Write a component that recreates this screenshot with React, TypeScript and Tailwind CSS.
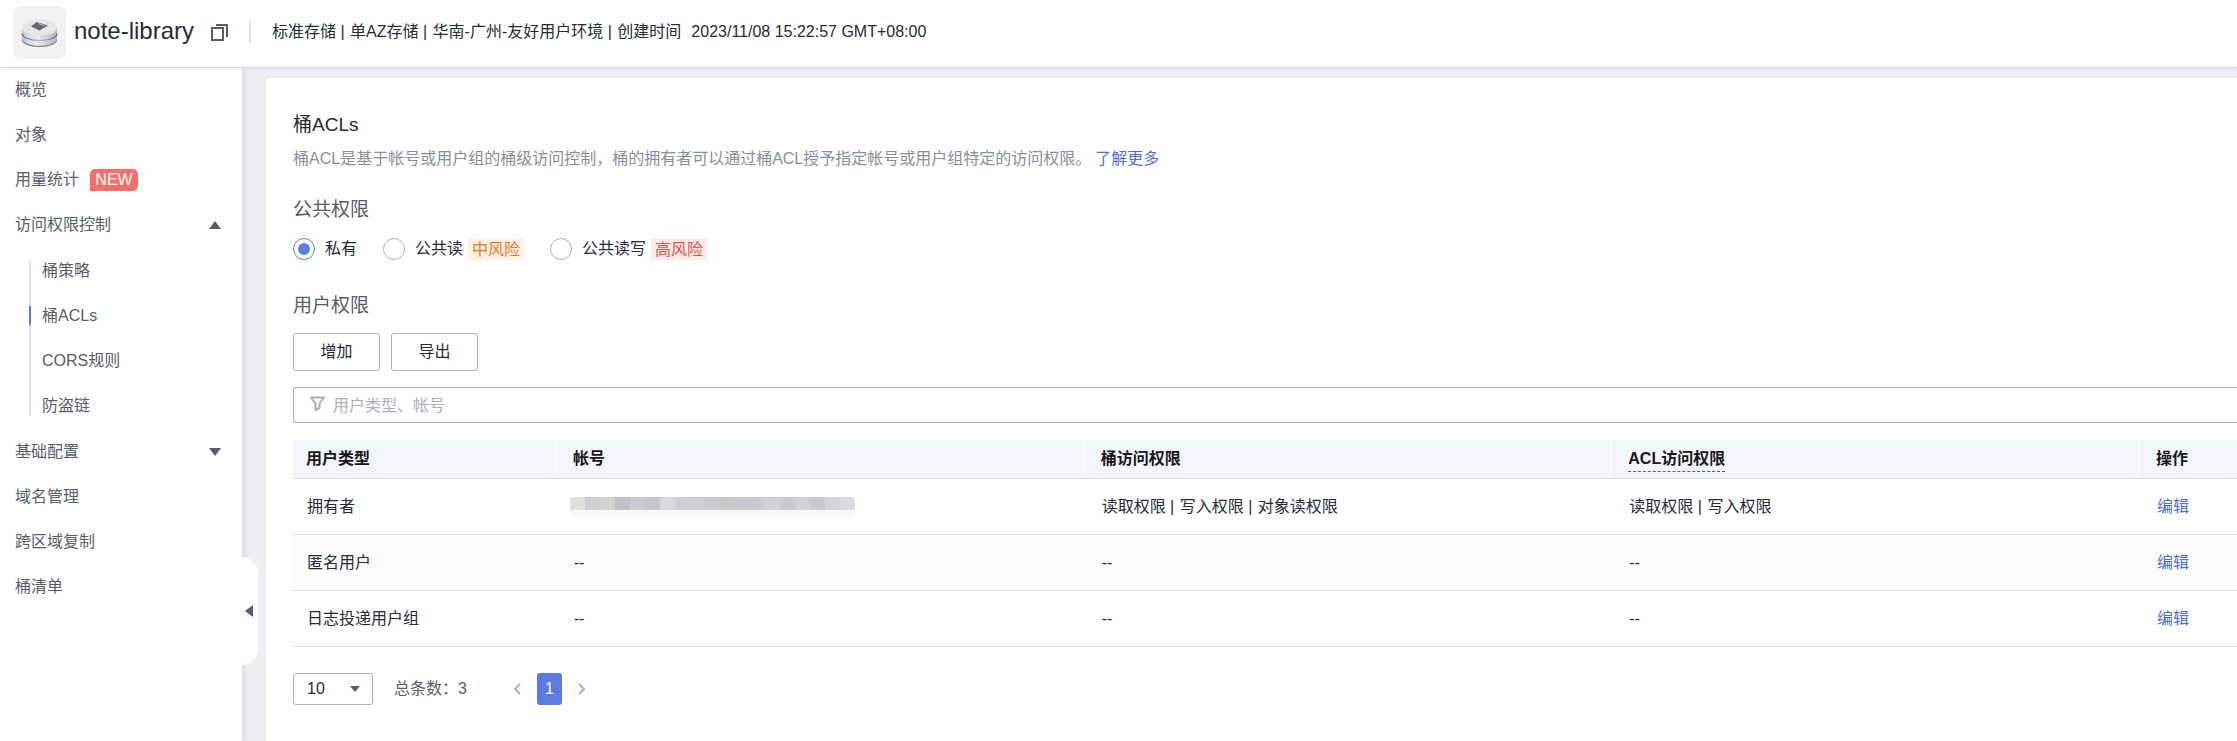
import React from 'react';
import clsx from 'clsx';

const columns = ['用户类型', '帐号', '桶访问权限', 'ACL访问权限', '操作'];

type Row = { type: string; account: string | null; bucket: string[]; acl: string[] };

const rows: Row[] = [
  { type: '拥有者', account: null, bucket: ['读取权限', '写入权限', '对象读权限'], acl: ['读取权限', '写入权限'] },
  { type: '匿名用户', account: '--', bucket: ['--'], acl: ['--'] },
  { type: '日志投递用户组', account: '--', bucket: ['--'], acl: ['--'] },
];

const maskTiles = [
  'bg-[#dfdfe2]', 'bg-[#ccd0d6]', 'bg-[#d2d2d3]', 'bg-[#bec1cb]', 'bg-[#cbccd1]', 'bg-[#c8c6cc]', 'bg-[#d9dadf]',
  'bg-[#cfcfd1]', 'bg-[#cfd0d7]', 'bg-[#cbccd2]', 'bg-[#c8c8c9]', 'bg-[#c9cad1]', 'bg-[#cacbce]', 'bg-[#d0d1d5]',
  'bg-[#c8c9d0]', 'bg-[#d0d2d6]', 'bg-[#c9cacf]', 'bg-[#d4d5d8]', 'bg-[#d9dae2]',
];

function MaskedAccount() {
  return (
    <div className="w-[285px] overflow-hidden rounded-[4px]" aria-hidden="true">
      <div className="flex h-[13px]">
        {maskTiles.map((tile, i) => (
          <span key={i} className={clsx('h-full flex-1', tile)} />
        ))}
      </div>
      <div className="h-[7px] bg-[#f9f9fa]" />
    </div>
  );
}

function Piped({ items }: { items: string[] }) {
  return (
    <>
      {items.map((item, i) => (
        <React.Fragment key={item}>
          {i > 0 && <span className="mr-px"> | </span>}
          {item}
        </React.Fragment>
      ))}
    </>
  );
}

function Triangle({ className, points, box }: { className?: string; points: string; box: string }) {
  return (
    <svg className={clsx('fill-[#575d6c]', className)} viewBox={box} aria-hidden="true">
      <polygon points={points} />
    </svg>
  );
}

function BucketLogo() {
  return (
    <svg className="size-[53px]" viewBox="0 0 53 53" aria-hidden="true">
      <defs>
        <linearGradient id="side" x1="0" x2="1">
          <stop offset="0" stopColor="#c4c5c8" />
          <stop offset="0.4" stopColor="#ececee" />
          <stop offset="1" stopColor="#b4b5b9" />
        </linearGradient>
        <linearGradient id="ring" x1="0" x2="1">
          <stop offset="0" stopColor="#3d63e0" />
          <stop offset="0.5" stopColor="#86b4f4" />
          <stop offset="1" stopColor="#4a55e0" />
        </linearGradient>
      </defs>
      <path d="M9 27v7c0 4 8 7 17.500 7S44 38 44 34v-7z" fill="#6f7377" />
      <path d="M9 22v10.500c0 4.200 8 7.400 17.500 7.400S44 36.700 44 32.500V22z" fill="url(#side)" />
      <path d="M9 27.500c0 4 8 7 17.500 7s17.500-3 17.500-7" fill="none" stroke="url(#ring)" strokeWidth="1.200" />
      <ellipse cx="26.500" cy="21.500" rx="17.500" ry="8.500" fill="#e6e6e7" />
      <path d="M18 20.500l5.500-4.500 11.500 3.500-8.500 5z" fill="#5f696d" />
      <path d="M25 17.500l7 2.500" stroke="#c5c9cb" strokeWidth="0.800" />
    </svg>
  );
}

function NavItem({ children, className }: { children: React.ReactNode; className?: string }) {
  return (
    <a href="#" className={clsx('flex h-[45px] items-center text-[#575d6c]', className)}>
      {children}
    </a>
  );
}

function Sidebar() {
  return (
    <aside className="relative z-10 w-[242px] shrink-0 bg-white shadow-[2px_0_6px_rgba(0,0,0,0.1)]">
      <nav className="-mt-px pr-[21px] pl-[15px]">
        <NavItem>概览</NavItem>
        <NavItem>对象</NavItem>
        <NavItem>
          用量统计
          <span className="ml-[11px] flex h-[22px] w-12 items-center justify-center rounded-[5px] rounded-bl-none bg-[#f66f6a] text-white">
            NEW
          </span>
        </NavItem>
        <NavItem className="justify-between">
          访问权限控制
          <Triangle className="h-2 w-3" box="0 0 12 8" points="6,0 12,8 0,8" />
        </NavItem>
        <div className="relative py-px pl-[27px] before:absolute before:top-[13px] before:bottom-[14px] before:left-[14px] before:w-0.5 before:bg-[#dfe1e6]">
          <NavItem>桶策略</NavItem>
          <NavItem className="relative text-[#526ecc] before:absolute before:-left-[13px] before:h-[19px] before:w-0.5 before:bg-[#5e7ce0]">
            桶ACLs
          </NavItem>
          <NavItem>CORS规则</NavItem>
          <NavItem>防盗链</NavItem>
        </div>
        <NavItem className="justify-between">
          基础配置
          <Triangle className="h-2 w-3" box="0 0 12 8" points="0,0 12,0 6,8" />
        </NavItem>
        <NavItem>域名管理</NavItem>
        <NavItem>跨区域复制</NavItem>
        <NavItem>桶清单</NavItem>
      </nav>
      <button
        type="button"
        aria-label="收起"
        className="absolute top-[489px] left-full flex h-[108px] w-4 items-center rounded-r-2xl bg-white pl-[3px]"
      >
        <Triangle className="h-3 w-2" box="0 0 8 12" points="8,0 8,12 0,6" />
      </button>
    </aside>
  );
}

function Radio({ id, label, tag, tagClass, checked }: { id: string; label: string; tag?: string; tagClass?: string; checked?: boolean }) {
  return (
    <div className="flex h-[22px] items-center">
      <input
        type="radio"
        id={id}
        name="public-access"
        defaultChecked={checked}
        className="grid size-[22px] appearance-none place-content-center rounded-full border border-[#adb0b8] bg-white before:size-3 before:rounded-full checked:border-[#5e7ce0] checked:before:bg-[#5e7ce0]"
      />
      <label htmlFor={id} className="pl-[10px] text-[#252b3a]">
        {label}
      </label>
      {tag && <span className={clsx('ml-[5px] h-[22px] px-1 leading-[23px]', tagClass)}>{tag}</span>}
    </div>
  );
}

export default function App() {
  return (
    <div className="flex min-h-screen flex-col overflow-x-hidden bg-[#eeeff5] font-['Liberation_Sans','Noto_Sans_CJK_SC',sans-serif] text-base leading-6 text-[#252b3a]">
      <header className="relative z-20 flex h-[68px] items-center border-b border-[#d9dade] bg-white pb-[3px] pl-[13px] shadow-[0_1px_2px_rgba(0,0,0,0.06)]">
        <div className="rounded-lg bg-[#f2f2f2]">
          <BucketLogo />
        </div>
        <h1 className="ml-2 pb-0.5 text-2xl">note-library</h1>
        <button type="button" aria-label="复制" className="ml-[17px]">
          <svg className="size-[17px]" viewBox="0 0 17 17" fill="none" stroke="#575d6c" strokeWidth="2" aria-hidden="true">
            <path d="M1 4h11v12H1z" />
            <path d="M5 1h11v12" />
          </svg>
        </button>
        <span className="ml-[21px] h-[21px] w-0.5 bg-[#dfe1e6]" />
        <p className="ml-[21px]">
          <Piped items={['标准存储', '单AZ存储', '华南-广州-友好用户环境', '创建时间']} />
          <span className="ml-[10px]">2023/11/08 15:22:57 GMT+08:00</span>
        </p>
      </header>

      <div className="flex flex-1">
        <Sidebar />
        <main className="mt-[10px] ml-6 min-w-0 flex-1 bg-white pt-[33px] pb-9 pl-[27px] shadow-[0_0_4px_rgba(0,0,0,0.08)]">
          <h2 className="text-[19px] leading-7">桶ACLs</h2>
          <p className="mt-2 text-[#8a8e99]">
            桶ACL是基于帐号或用户组的桶级访问控制，桶的拥有者可以通过桶ACL授予指定帐号或用户组特定的访问权限。
            <a href="#" className="ml-1 text-[#526ecc]">
              了解更多
            </a>
          </p>

          <h3 className="mt-[25px] text-[19px] leading-7 text-[#575d6c]">公共权限</h3>
          <div className="mt-[14px] flex gap-[26px]">
            <Radio id="private" label="私有" checked />
            <Radio id="read" label="公共读" tag="中风险" tagClass="bg-[#fff1e4] text-[#e37d29]" />
            <Radio id="read-write" label="公共读写" tag="高风险" tagClass="bg-[#ffeaea] text-[#de504e]" />
          </div>

          <h3 className="mt-8 text-[19px] leading-7 text-[#575d6c]">用户权限</h3>
          <div className="mt-[13px] flex gap-[11px]">
            <button type="button" className="h-[38px] w-[87px] rounded-[3px] border border-[#adb0b8]">
              增加
            </button>
            <button type="button" className="h-[38px] w-[87px] rounded-[3px] border border-[#adb0b8]">
              导出
            </button>
          </div>

          <div className="mt-4 flex h-9 items-center rounded-l-[3px] border border-r-0 border-[#adb0b8] pl-4">
            <svg className="mb-[3px] size-[15px]" viewBox="0 0 15 15" fill="none" stroke="#adb0b8" strokeWidth="2" strokeLinejoin="round" aria-hidden="true">
              <path d="M1 1.500h13L9.500 7.500v4.500L5.500 14V7.500z" />
            </svg>
            <input
              type="text"
              aria-label="用户类型、帐号"
              placeholder="用户类型、帐号"
              className="ml-2 min-w-0 flex-1 pt-0.5 outline-none placeholder:text-[#adb0b8]"
            />
          </div>

          <table className="mt-[17px] w-full table-fixed border-separate border-spacing-0 text-left">
            <colgroup>
              <col className="w-[262px]" />
              <col />
              <col />
              <col />
              <col className="w-[99px]" />
            </colgroup>
            <thead>
              <tr className="bg-[#f2f5fc]">
                {columns.map((name, i) => (
                  <th
                    key={name}
                    scope="col"
                    className={clsx('h-[39px] border-b border-[#dfe1e6] p-0 align-middle font-bold text-[#181818]', i === 0 ? 'pl-[13px]' : 'pl-0')}
                  >
                    {i === 0 ? (
                      name
                    ) : (
                      <div className="flex h-[38px] items-center border-l border-white pl-[17px]">
                        {name === 'ACL访问权限' ? (
                          <span className="border-b border-dashed border-[#575d6c]">{name}</span>
                        ) : (
                          name
                        )}
                      </div>
                    )}
                  </th>
                ))}
              </tr>
            </thead>
            <tbody>
              {rows.map((row) => (
                <tr key={row.type} className="even:bg-[#fcfcfc] [&>td]:h-14 [&>td]:border-b [&>td]:border-[#dfe1e6] [&>td]:p-0">
                  <td>
                    <div className="pl-[14px]">{row.type}</div>
                  </td>
                  <td>
                    {row.account === null ? (
                      <div className="pl-[15px]">
                        <MaskedAccount />
                      </div>
                    ) : (
                      <div className="pl-[19px]">{row.account}</div>
                    )}
                  </td>
                  <td>
                    <div className="pl-[19px]">
                      <Piped items={row.bucket} />
                    </div>
                  </td>
                  <td>
                    <div className="pl-[19px]">
                      <Piped items={row.acl} />
                    </div>
                  </td>
                  <td>
                    <a href="#" className="pl-[19px] text-[#526ecc]">
                      编辑
                    </a>
                  </td>
                </tr>
              ))}
            </tbody>
          </table>

          <div className="mt-[26px] flex h-8 items-center">
            <div className="relative">
              <select aria-label="每页条数" className="h-8 w-20 appearance-none rounded-[3px] border border-[#adb0b8] bg-white pl-[13px] leading-[30px]">
                <option>10</option>
                <option>20</option>
                <option>50</option>
              </select>
              <Triangle className="pointer-events-none absolute top-[13px] right-[13px] h-[6px] w-[10px]" box="0 0 10 6" points="0,0 10,0 5,6" />
            </div>
            <span className="ml-[21px] text-[#575d6c]">总条数：3</span>
            <button type="button" aria-label="上一页" className="ml-[46px]">
              <svg className="h-3 w-2" viewBox="0 0 8 12" fill="none" stroke="#adb0b8" strokeWidth="2" aria-hidden="true">
                <path d="M7 1L2 6l5 5" />
              </svg>
            </button>
            <button type="button" className="ml-4 h-8 w-[25px] rounded-[3px] bg-[#5e7ce0] text-white">
              1
            </button>
            <button type="button" aria-label="下一页" className="ml-4">
              <svg className="h-3 w-2" viewBox="0 0 8 12" fill="none" stroke="#adb0b8" strokeWidth="2" aria-hidden="true">
                <path d="M1 1l5 5-5 5" />
              </svg>
            </button>
          </div>
        </main>
      </div>
    </div>
  );
}
